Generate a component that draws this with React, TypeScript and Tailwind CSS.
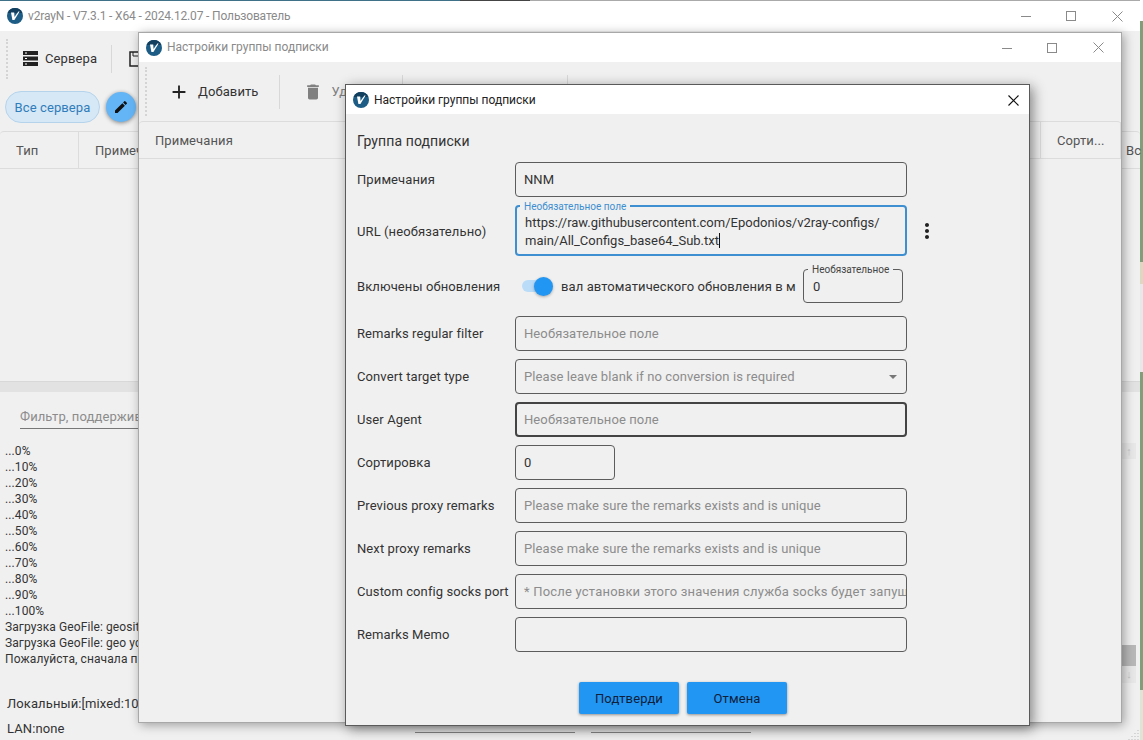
import React from "react";
import { MdAdd, MdDelete, MdEdit, MdMoreVert } from "react-icons/md";

function Logo() {
  return (
    <svg width="16" height="16" viewBox="0 0 16 16" className="shrink-0">
      <circle cx="8" cy="8" r="8" fill="#1d5d85" />
      <path d="M0.6 5 A8 8 0 0 1 15.4 5 Z" fill="#123f5e" />
      <path d="M4 4.6 L7.2 4.6 L7.5 9 L11.4 3.6 L12.6 3.6 L7.4 12 L5.4 12 Z" fill="#fff" />
    </svg>
  );
}

function WinControls() {
  const color = "#8a8a8a";
  return (
    <div className="flex h-full">
      <div className="flex w-[45px] items-center justify-center">
        <svg width="10" height="10" viewBox="0 0 10 10">
          <path d="M0 5.5H10" stroke={color} />
        </svg>
      </div>
      <div className="flex w-[46px] items-center justify-center">
        <svg width="10" height="10" viewBox="0 0 10 10">
          <rect x="0.5" y="0.5" width="9" height="9" fill="none" stroke={color} />
        </svg>
      </div>
      <div className="flex w-[46px] items-center justify-center">
        <svg width="11" height="11" viewBox="0 0 11 11">
          <path d="M0.5 0.5L10.5 10.5M10.5 0.5L0.5 10.5" stroke={color} />
        </svg>
      </div>
    </div>
  );
}

function Grip({ className }: { className: string }) {
  return <div className={"w-0 border-l-2 border-dotted border-[#d4d4d4] " + className} />;
}

function Field({
  label,
  children,
  wide = true,
  strong,
}: {
  label: string;
  children?: React.ReactNode;
  wide?: boolean;
  strong?: boolean;
}) {
  return (
    <div className="mb-2 flex h-[35px] items-center">
      <div className="w-[158px] shrink-0 whitespace-nowrap text-[#333]">{label}</div>
      <div
        className={
          "flex h-full items-center overflow-hidden whitespace-nowrap rounded-[4px] " +
          (wide ? "w-[392px] " : "w-[100px] ") +
          (strong ? "border-2 border-[#444] px-[7px]" : "border border-[#5c5c5c] px-2")
        }
      >
        {children}
      </div>
    </div>
  );
}

function Hint({ children }: { children: React.ReactNode }) {
  return <span className="text-[#8c8c8c]">{children}</span>;
}

const logLines = [
  "...0%",
  "...10%",
  "...20%",
  "...30%",
  "...40%",
  "...50%",
  "...60%",
  "...70%",
  "...80%",
  "...90%",
  "...100%",
  "Загрузка GeoFile: geosite успешно",
  "Загрузка GeoFile: geo успешно",
  "Пожалуйста, сначала проверьте настройки",
];

export default function App() {
  return (
    <div
      className="relative h-[740px] w-[1143px] overflow-hidden bg-[#7f9f78] text-[13px] leading-[17px] tracking-[0.1px] text-[#333]"
      style={{ fontFamily: 'Roboto, "Noto Sans", sans-serif' }}
    >
      {/* desktop behind the windows */}
      <div className="absolute left-[1140px] top-0 h-[21px] w-[3px] bg-white" />
      <div className="absolute left-[1140px] top-[262px] h-[22px] w-[3px] bg-[#ddd8c0]" />
      <div className="absolute left-[1140px] top-[284px] h-[88px] w-[3px] bg-[#e8e8e8]" />
      <div className="absolute left-[1140px] top-[690px] h-[50px] w-[3px] bg-[#dfe5d5]" />

      {/* main window */}
      <div className="absolute left-0 top-0 flex h-[740px] w-[1140px] flex-col bg-[#f0f0f0]">
        <div className="flex h-px shrink-0">
          <div className="w-[460px] bg-[#3f7288]" />
          <div className="w-[70px] bg-[#444]" />
          <div className="flex-1 bg-[#aaa]" />
        </div>
        <div className="flex h-[30px] shrink-0 items-center justify-between bg-white pl-[7px]">
          <div className="flex items-center gap-[5px] text-[12px] tracking-[-0.15px] text-[#8a8a8a]">
            <Logo />
            <span>v2rayN - V7.3.1 - X64 - 2024.12.07 - Пользователь</span>
          </div>
          <WinControls />
        </div>

        <div className="flex h-[55px] shrink-0 items-center pl-[6px]">
          <Grip className="h-[40px]" />
          <svg width="15" height="15" viewBox="0 0 15 15" className="ml-[15px]">
            <path d="M0 0H15V4H0ZM0 5.5H15V9.5H0ZM0 11H15V15H0Z" fill="#222" />
            <path d="M2 2H4M2 7.5H4M2 13H4" stroke="#fff" />
          </svg>
          <span className="ml-[7px]">Сервера</span>
          <div className="ml-[14px] h-[28px] w-px bg-[#d8d8d8]" />
          <svg width="14" height="16" viewBox="0 0 14 16" className="ml-[17px]">
            <path d="M1 1H13V15H1Z" fill="none" stroke="#222" strokeWidth="1.5" />
            <path d="M4 1V5H10V1" fill="none" stroke="#222" />
          </svg>
        </div>

        <div className="flex h-[45px] shrink-0 items-center pb-[3px] pl-[5px]">
          <div className="flex h-[32px] w-[95px] items-center justify-center rounded-full border border-[#b5d4ec] bg-[#d6e7f6] text-[#2f7dbb]">
            Все сервера
          </div>
          <div className="ml-[6px] flex h-[30px] w-[30px] items-center justify-center rounded-full bg-[#64b5f6] text-[#111] shadow-[0_1px_4px_rgba(0,0,0,0.45)]">
            <MdEdit size={16} />
          </div>
        </div>

        <div className="flex h-[38px] shrink-0 items-center rounded-t-[4px] border-y border-[#dcdcdc] text-[#555]">
          <div className="flex h-full w-[79px] items-center border-r border-[#dcdcdc] pl-[16px]">Тип</div>
          <div className="pl-[16px]">Примечания</div>
          <div className="ml-auto w-[14px] whitespace-nowrap">Вс</div>
        </div>

        <div className="h-[212px] shrink-0" />
        <div className="h-[11px] shrink-0 border-t border-[#d8d8d8] bg-[#e2e2e2]" />

        <div className="ml-[20px] mt-[12px] flex h-[25px] w-[300px] shrink-0 items-center whitespace-nowrap border-b border-[#777] text-[#8c8c8c]">
          Фильтр, поддерживает регулярные выражения
        </div>

        <div className="mt-[14px] flex shrink-0 flex-col pl-[5px] text-[12px] leading-[16px]">
          {logLines.map((line) => (
            <div key={line}>{line}</div>
          ))}
        </div>

        <div className="mt-[28px] pl-[7px]">Локальный:[mixed:10808]</div>
        <div className="mt-[8px] pl-[7px]">LAN:none</div>

        {/* log scrollbar */}
        <div className="absolute left-[1122px] top-[443px] flex h-[16px] w-[14px] items-center justify-center bg-[#e8e8e8] text-[11px] text-[#c4c4c4]">
          ↑
        </div>
        <div className="absolute left-[1122px] top-[645px] h-[21px] w-[14px] bg-[#b8b8b8]" />
        <div className="absolute left-[1122px] top-[666px] flex h-[17px] w-[14px] items-center justify-center bg-[#e8e8e8] text-[11px] text-[#c4c4c4]">
          ↓
        </div>
        <div className="absolute left-[415px] top-[732px] h-px w-[160px] bg-[#888]" />
        <div className="absolute left-[591px] top-[732px] h-px w-[160px] bg-[#888]" />
        <svg width="12" height="12" viewBox="0 0 12 12" className="absolute left-[1128px] top-[728px]">
          <path d="M10 2v1M7 5v1M10 5v1M4 8v1M7 8v1M10 8v1M1 11v1M4 11v1M7 11v1M10 11v1" stroke="#bbb" />
        </svg>
      </div>

      {/* settings list window */}
      <div className="absolute left-[138px] top-[32px] flex h-[691px] w-[984px] flex-col border border-[#a8a8a8] bg-[#f0f0f0] shadow-[2px_2px_10px_rgba(0,0,0,0.35)]">
        <div className="flex h-[29px] shrink-0 items-center justify-between bg-white pl-[7px]">
          <div className="flex items-center gap-[5px] text-[12px] tracking-normal text-[#8a8a8a]">
            <Logo />
            <span>Настройки группы подписки</span>
          </div>
          <WinControls />
        </div>
        <div className="flex h-[59px] shrink-0 items-center pl-[6px]">
          <Grip className="h-[49px]" />
          <MdAdd size={22} className="ml-[21px] text-[#222]" />
          <span className="ml-[8px]">Добавить</span>
          <div className="ml-[20px] h-[34px] w-px bg-[#d8d8d8]" />
          <MdDelete size={20} className="ml-[23px] text-[#808080]" />
          <span className="ml-[9px] text-[#808080]">Удалить</span>
          <div className="ml-[19px] h-[34px] w-px bg-[#d8d8d8]" />
          <MdEdit size={18} className="ml-[30px] text-[#808080]" />
          <div className="ml-[116px] h-[34px] w-px bg-[#d8d8d8]" />
          <div className="ml-[22px] h-[16px] w-[14px] border-2 border-[#808080]" />
        </div>
        <div className="flex h-[38px] shrink-0 items-center justify-between rounded-t-[4px] border-y border-[#dcdcdc] text-[#555]">
          <div className="pl-[16px]">Примечания</div>
          <div className="flex h-full w-[81px] items-center border-r border-l border-[#dcdcdc] pl-[16px]">
            Сорти...
          </div>
        </div>
      </div>

      {/* edit dialog */}
      <div className="absolute left-[345px] top-[84px] flex h-[642px] w-[685px] flex-col border border-[#5a5a5a] bg-[#f0f0f0] shadow-[3px_3px_12px_rgba(0,0,0,0.45)]">
        <div className="flex h-[29px] shrink-0 items-center justify-between bg-white pl-[7px] pr-[10px] pt-px">
          <div className="flex items-center gap-[5px] text-[12px] tracking-normal text-[#222]">
            <Logo />
            <span>Настройки группы подписки</span>
          </div>
          <svg width="11" height="11" viewBox="0 0 11 11">
            <path d="M0.5 0.5L10.5 10.5M10.5 0.5L0.5 10.5" stroke="#111" strokeWidth="1.1" />
          </svg>
        </div>

        <div className="flex flex-1 flex-col pl-[11px]">
          <div className="mb-[11px] mt-[17px] text-[14px] leading-[20px]">Группа подписки</div>

          <Field label="Примечания">NNM</Field>

          <div className="mb-[13px] flex h-[51px] items-center">
            <div className="w-[158px] shrink-0 pt-px text-[#333]">URL (необязательно)</div>
            <div className="relative h-full w-[392px] rounded-[4px] border-2 border-[#3d8fd1] px-[8px] pt-[7px] tracking-normal">
              <div className="absolute left-[3px] top-[-6px] bg-[#f0f0f0] px-[4px] text-[10px] leading-[12px] text-[#3d8fd1]">
                Необязательное поле
              </div>
              <div className="whitespace-nowrap">https://raw.githubusercontent.com/Epodonios/v2ray-configs/</div>
              <div className="mt-px flex items-center whitespace-nowrap">
                main/All_Configs_base64_Sub.txt
                <span className="h-[15px] w-px bg-[#111]" />
              </div>
            </div>
            <MdMoreVert size={24} className="ml-[8px] text-[#222]" />
          </div>

          <div className="mb-[13px] flex h-[34px] items-center">
            <div className="w-[165px] shrink-0 whitespace-nowrap text-[#333]">Включены обновления</div>
            <div className="relative h-[12px] w-[22px] shrink-0 rounded-full bg-[#bbdcf8]">
              <div className="absolute left-[12px] top-[-3.5px] h-[19px] w-[19px] rounded-full bg-[#2196f3] shadow-[0_1px_3px_rgba(0,0,0,0.3)]" />
            </div>
            <div className="ml-[17px] w-[234px] shrink-0 whitespace-nowrap text-[#333]">вал автоматического обновления в м</div>
            <div className="relative ml-[8px] flex h-full w-[100px] items-center rounded-[4px] border border-[#5c5c5c] px-[9px]">
              <div className="absolute left-[4px] top-[-6px] bg-[#f0f0f0] px-[4px] text-[10px] leading-[12px] tracking-normal text-[#444]">
                Необязательное
              </div>
              0
            </div>
          </div>

          <Field label="Remarks regular filter">
            <Hint>Необязательное поле</Hint>
          </Field>
          <Field label="Convert target type">
            <Hint>Please leave blank if no conversion is required</Hint>
            <svg width="8" height="4" viewBox="0 0 8 4" className="ml-auto mr-px">
              <path d="M0 0H8L4 4Z" fill="#777" />
            </svg>
          </Field>
          <Field label="User Agent" strong>
            <Hint>Необязательное поле</Hint>
          </Field>
          <Field label="Сортировка" wide={false}>
            0
          </Field>
          <Field label="Previous proxy remarks">
            <Hint>Please make sure the remarks exists and is unique</Hint>
          </Field>
          <Field label="Next proxy remarks">
            <Hint>Please make sure the remarks exists and is unique</Hint>
          </Field>
          <Field label="Custom config socks port">
            <span className="tracking-[0.2px] text-[#8c8c8c]">* После установки этого значения служба socks будет запущена</span>
          </Field>
          <Field label="Remarks Memo" />

          <div className="ml-[222px] mt-[22px] flex gap-2">
            <div className="flex h-[32px] w-[100px] items-center justify-center rounded-[2px] bg-[#2196f3] text-[#10203a] shadow-[0_1px_3px_rgba(0,0,0,0.4)]">
              <div className="w-[68px] overflow-hidden whitespace-nowrap">Подтвердить</div>
            </div>
            <div className="flex h-[32px] w-[100px] items-center justify-center rounded-[2px] bg-[#2196f3] text-[#10203a] shadow-[0_1px_3px_rgba(0,0,0,0.4)]">
              Отмена
            </div>
          </div>
        </div>
      </div>
    </div>
  );
}
